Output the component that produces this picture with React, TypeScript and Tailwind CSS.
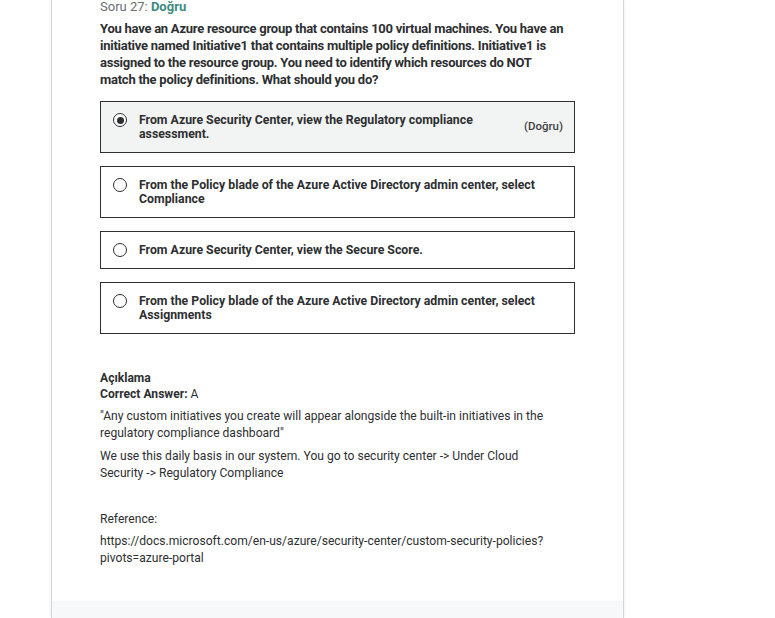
const options = [
  {
    text: "From Azure Security Center, view the Regulatory compliance assessment.",
    selected: true,
    correct: true,
  },
  {
    text: "From the Policy blade of the Azure Active Directory admin center, select Compliance",
  },
  { text: "From Azure Security Center, view the Secure Score." },
  {
    text: "From the Policy blade of the Azure Active Directory admin center, select Assignments",
  },
];

function Radio({ checked }: { checked?: boolean }) {
  return (
    <span className="flex h-[14px] w-[14px] shrink-0 items-center justify-center self-start rounded-full border border-[#2d2f31] bg-white">
      {checked && <span className="h-[7px] w-[7px] rounded-full bg-[#2d2f31]" />}
    </span>
  );
}

export default function App() {
  return (
    <div className="h-[618px] overflow-hidden bg-white font-['Roboto',sans-serif] text-[#2d2f31]">
      <div className="ml-[51px] flex h-full w-[573px] flex-col border-x border-[#d1d7dc] shadow-[0_0_4px_rgba(0,0,0,0.08)]">
        <div className="flex-1 px-[48px]">
          <div className="-mt-[2px] text-[13px] leading-[18px] text-[#6a6f73]">
            Soru 27: <span className="font-bold text-[#3b8b80]">Doğru</span>
          </div>
          <p className="mt-[4px] w-[465px] text-[13px] font-bold leading-[17px] tracking-[-0.25px]">
            You have an Azure resource group that contains 100 virtual machines. You have an
            initiative named Initiative1 that contains multiple policy definitions. Initiative1 is
            assigned to the resource group. You need to identify which resources do NOT match the
            policy definitions. What should you do?
          </p>

          <div className="mt-[13px] flex w-[475px] flex-col gap-[13px]">
            {options.map((o, i) => (
              <div
                key={i}
                className={`flex items-center gap-[12px] border border-[#2d2f31] py-[11px] pl-[12px] pr-[11px] ${
                  o.selected ? "bg-[#f2f4f3]" : "bg-white"
                }`}
              >
                <Radio checked={o.selected} />
                <span className="w-[402px] text-[12.3px] font-bold leading-[14px]">{o.text}</span>
                {o.correct && (
                  <span className="ml-auto text-[11.5px] font-medium text-[#3e4143]">(Doğru)</span>
                )}
              </div>
            ))}
          </div>

          <div className="mt-[36px] w-[455px] text-[12.1px] leading-[16px]">
            <div className="font-bold">Açıklama</div>
            <div>
              <span className="font-bold">Correct Answer:</span> A
            </div>
            <p className="mt-[6px] leading-[17px]">
              "Any custom initiatives you create will appear alongside the built-in initiatives in the
              regulatory compliance dashboard"
            </p>
            <p className="mt-[6px] leading-[17px]">
              We use this daily basis in our system. You go to security center -&gt; Under Cloud
              Security -&gt; Regulatory Compliance
            </p>
            <p className="mt-[29px] leading-[17px]">Reference:</p>
            <p className="mt-[5px] leading-[17px]">
              https://docs.microsoft.com/en-us/azure/security-center/custom-security-policies?
              pivots=azure-portal
            </p>
          </div>
        </div>
        <div className="h-[17px] bg-[#f7f8fa]" />
      </div>
    </div>
  );
}
